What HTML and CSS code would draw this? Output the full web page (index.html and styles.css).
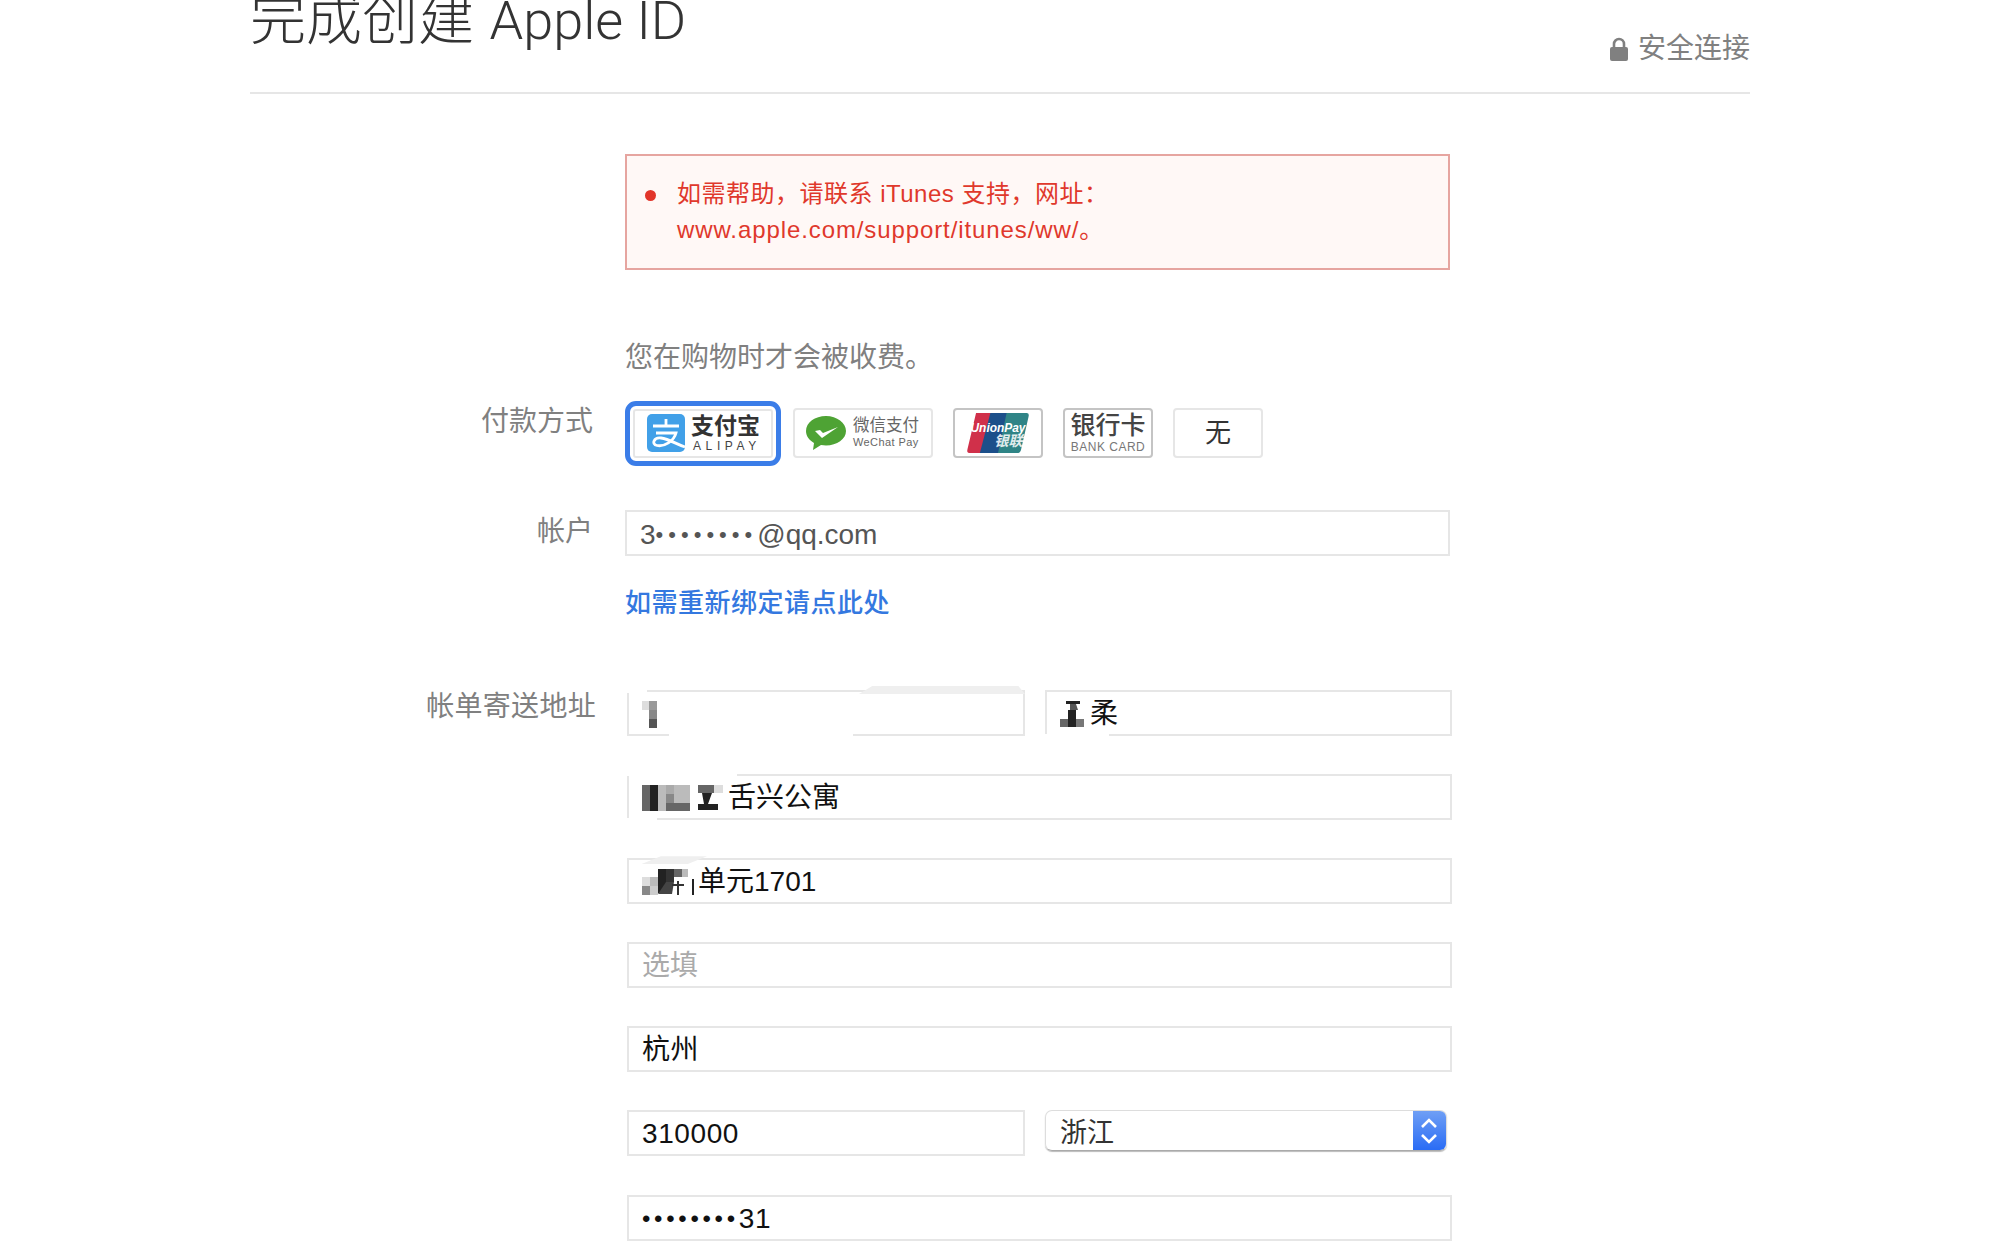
FILE: index.html
```html
<!DOCTYPE html>
<html lang="zh-CN">
<head>
<meta charset="utf-8">
<title>完成创建 Apple ID</title>
<link rel="stylesheet" href="styles.css">
</head>
<body>
<div class="page">
  <header class="head">
    <h1 class="title">完成创建 <span class="title-en">Apple ID</span></h1>
    <div class="secure">
      <svg class="lock" width="20" height="24" viewBox="0 0 20 24"><path d="M5 11V7a5 5 0 0 1 10 0v4" fill="none" stroke="#808080" stroke-width="2.6"/><rect x="1" y="10" width="18" height="14" rx="2" fill="#808080"/></svg>
      <span>安全连接</span>
    </div>
  </header>

  <main class="form">
    <div class="error">
      <span class="dot"></span>
      <p class="error-text">如需帮助，请联系 iTunes 支持，网址：<br><span class="error-url">www.apple.com/support/itunes/ww/。</span></p>
    </div>

    <p class="note">您在购物时才会被收费。</p>

    <div class="row pay-row">
      <label class="label pay-label">付款方式</label>
      <div class="pays">
        <div class="alipay-ring">
          <div class="alipay">
            <svg class="ali-icon" width="38" height="38" viewBox="0 0 38 38"><rect width="38" height="38" rx="5" fill="#41a0e8"/><path d="M6 12h26M19 5v7M9 19h20C27 27 17 33 10 31.500 4 30 7 23 14 24c8 1 15 6 24 9" fill="none" stroke="#fff" stroke-width="2.800"/></svg>
            <span class="ali-text"><b>支付宝</b><i>ALIPAY</i></span>
          </div>
        </div>
        <div class="pay pay-wechat">
          <svg width="42" height="36" viewBox="0 0 42 36"><path d="M21 1C10 1 1 7.500 1 16c0 5 3 9 8 12l-1 7 8-5c1.700.300 3.300.500 5 .500 11 0 20-6.500 20-14.500S32 1 21 1z" fill="#4ea334"/><path d="M10 16l7 7 16-11-15 6-3-3z" fill="#fff"/></svg>
          <span class="we-text"><b>微信支付</b><i>WeChat Pay</i></span>
        </div>
        <div class="pay pay-union">
          <svg width="64" height="42" viewBox="0 0 66 44">
            <path d="M10 1h22l-9 42H3q-3 0-2-4z" fill="#d0304a"/>
            <path d="M25 1h22l-9 42H14z" fill="#1c4f8a"/>
            <path d="M42 1h21q3 0 2 4l-8 35q-1 3-4 3H33z" fill="#2f8486"/>
            <text class="up-en" x="33" y="21" text-anchor="middle">UnionPay</text>
            <text class="up-cn" x="44" y="36" text-anchor="middle">银联</text>
          </svg>
        </div>
        <div class="pay pay-bank"><b>银行卡</b><i>BANK CARD</i></div>
        <div class="pay pay-none">无</div>
      </div>
    </div>

    <div class="row account-row">
      <label class="label account-label">帐户</label>
      <div class="field account">3<span class="dots-grey">••••••••</span>@qq.com</div>
    </div>

    <a class="rebind" href="#">如需重新绑定请点此处</a>

    <div class="row address-row">
      <label class="label addr-label">帐单寄送地址</label>
      <div class="fields">
        <div class="pair">
          <div class="field dark">
            <span class="smudge s1"></span><span class="smudge s2"></span><span class="smudge s3"></span>
            <svg class="mosaic" width="24" height="30" viewBox="0 0 24 30"><rect x="0" y="2" width="7" height="9" fill="#ddd"/><rect x="7" y="2" width="8" height="9" fill="#999"/><rect x="7" y="11" width="8" height="9" fill="#888"/><rect x="7" y="20" width="8" height="9" fill="#555"/></svg>
          </div>
          <div class="field dark">
            <span class="smudge s4"></span>
            <svg class="mosaic" width="30" height="30" viewBox="0 0 30 30"><rect x="6" y="2" width="14" height="3" fill="#222"/><path d="M10 5h6l2 6H10z" fill="#555"/><rect x="0" y="20" width="8" height="8" fill="#666"/><rect x="8" y="11" width="8" height="17" fill="#222"/><rect x="16" y="20" width="8" height="8" fill="#777"/></svg><span class="tail">柔</span>
          </div>
        </div>
        <div class="field dark">
          <span class="smudge s5"></span><span class="smudge s6"></span>
          <svg class="mosaic" width="86" height="30" viewBox="0 0 86 30"><rect x="0" y="2" width="8" height="26" fill="#666"/><rect x="8" y="2" width="8" height="26" fill="#222"/><rect x="16" y="2" width="8" height="26" fill="#bbb"/><rect x="24" y="2" width="8" height="9" fill="#aaa"/><rect x="24" y="11" width="8" height="9" fill="#888"/><rect x="24" y="20" width="24" height="8" fill="#666"/><rect x="32" y="2" width="16" height="18" fill="#bbb"/><rect x="56" y="2" width="16" height="8" fill="#666"/><rect x="72" y="2" width="9" height="8" fill="#ddd"/><path d="M60 10h10l-4 11h10v6H56v-6h6z" fill="#222"/></svg><span class="tail">舌兴公寓</span>
        </div>
        <div class="field dark">
          <span class="smudge s7"></span>
          <svg class="mosaic" width="56" height="30" viewBox="0 0 56 30"><rect x="0" y="10" width="8" height="9" fill="#ddd"/><rect x="0" y="19" width="8" height="9" fill="#888"/><rect x="8" y="10" width="8" height="9" fill="#bbb"/><rect x="8" y="19" width="8" height="9" fill="#ccc"/><rect x="16" y="2" width="8" height="24" fill="#222"/><rect x="24" y="2" width="8" height="13" fill="#333"/><rect x="32" y="2" width="8" height="8" fill="#666"/><rect x="40" y="2" width="6" height="8" fill="#bbb"/><path d="M24 15h8l-2 12H16z" fill="#444"/><path d="M30 18h12M36 14v14" stroke="#333" stroke-width="2"/><rect x="50" y="12" width="2" height="16" fill="#222"/></svg><span class="tail">单元1701</span>
        </div>
        <div class="field placeholder">选填</div>
        <div class="field dark">杭州</div>
        <div class="pair">
          <div class="field dark">310000</div>
          <div class="select">
            <span class="select-value">浙江</span>
            <span class="select-arrows">
              <svg width="20" height="30" viewBox="0 0 20 30"><path d="M3 11l7-7 7 7M3 19l7 7 7-7" fill="none" stroke="#fff" stroke-width="2.600"/></svg>
            </span>
          </div>
        </div>
        <div class="field dark"><span class="dots-dark">••••••••</span>31</div>
      </div>
    </div>
  </main>
</div>
</body>
</html>
```
FILE: styles.css
```css
* { box-sizing: border-box; }
html, body { margin: 0; padding: 0; height: 100%; overflow: hidden; background: #fff; }
body {
  font-family: "Liberation Sans", "Noto Sans CJK SC", sans-serif;
  color: #333;
}
.page { width: 1500px; margin: -23px 0 0 250px; }

.head {
  display: flex;
  justify-content: space-between;
  align-items: flex-end;
  height: 117px;
  border-bottom: 2px solid #e6e6e6;
}
.title {
  margin: 0 0 39px;
  font-size: 56px;
  line-height: 64px;
  font-weight: 300;
  color: #333;
}
.title-en {
  font-family: Roboto, "Liberation Sans", sans-serif;
  font-weight: 300;
  font-size: 54px;
}
.secure {
  display: flex;
  align-items: center;
  gap: 9px;
  margin-bottom: 23px;
  font-size: 28px;
  line-height: 40px;
  color: #808080;
}
.lock { display: block; }

.form { display: flex; flex-direction: column; }

.error {
  display: flex;
  align-items: flex-start;
  margin: 60px 0 0 375px;
  width: 825px;
  height: 116px;
  padding: 20px 0 0 18px;
  border: 2px solid #e6a5a0;
  background: #fff8f6;
}
.dot {
  flex: none;
  width: 11px;
  height: 11px;
  margin-top: 14px;
  border-radius: 50%;
  background: #e2352a;
}
.error-text {
  margin: 0 0 0 21px;
  font-size: 24px;
  line-height: 36px;
  color: #e0382c;
  letter-spacing: .5px;
}
.error-url { letter-spacing: .9px; }

.note {
  margin: 69px 0 0 375px;
  font-size: 28px;
  line-height: 38px;
  color: #808080;
}

.row { display: flex; align-items: flex-start; }
.label {
  flex: none;
  width: 343px;
  font-size: 28px;
  line-height: 40px;
  color: #808080;
  text-align: right;
}

.pay-row { margin-top: 23.500px; }
.pay-label { padding-top: 1px; margin-right: 32px; }
.pays { display: flex; align-items: flex-start; gap: 20px; }
.alipay-ring {
  width: 156px;
  height: 65px;
  margin-right: -8px;
  border: 5px solid #3b7de8;
  border-radius: 11px;
  padding: 3px;
}
.alipay {
  display: flex;
  align-items: center;
  height: 100%;
  padding-left: 12px;
  gap: 6px;
  border: 2px solid #e6e6e6;
  border-radius: 3px;
}
.ali-icon { flex: none; display: block; }
.ali-text, .we-text { display: flex; flex-direction: column; }
.ali-text b { font-size: 23px; line-height: 25px; font-weight: 700; color: #333; }
.ali-text i { font-size: 12px; line-height: 14px; font-style: normal; letter-spacing: 4.600px; color: #444; padding-left: 2px; }

.pay {
  height: 50px;
  margin-top: 7px;
  border: 2px solid #e6e6e6;
  border-radius: 4px;
  background: #fff;
}
.pay-wechat {
  display: flex;
  align-items: center;
  gap: 6px;
  width: 140px;
  padding-left: 10px;
}
.we-text b { font-size: 16.500px; line-height: 20px; font-weight: 400; color: #666; }
.we-text i { font-size: 11px; line-height: 15px; font-style: normal; color: #666; letter-spacing: .4px; }
.pay-union {
  display: flex;
  align-items: center;
  justify-content: center;
  width: 90px;
  border-color: #c4c4c4;
}
.up-en { font-size: 12.500px; font-weight: 700; font-style: italic; fill: #fff; }
.up-cn { font-size: 15px; font-weight: 700; font-style: italic; fill: #fff; opacity: .85; }
.pay-bank {
  display: flex;
  flex-direction: column;
  align-items: center;
  padding-top: 1px;
  width: 90px;
  border-color: #c4c4c4;
}
.pay-bank b { font-size: 25px; line-height: 29px; font-weight: 500; color: #444; }
.pay-bank i { font-size: 12px; line-height: 14px; font-style: normal; letter-spacing: .5px; color: #777; }
.pay-none {
  width: 90px;
  text-align: center;
  font-size: 26px;
  line-height: 46px;
  color: #333;
}

.field {
  position: relative;
  display: flex;
  align-items: center;
  height: 46px;
  padding: 2px 13px 0;
  border: 2px solid #e6e6e6;
  font-size: 28px;
  line-height: 40px;
  background: #fff;
}
.account-row { margin-top: 44.500px; }
.account-label { margin-right: 32px; padding-top: 2px; }
.account { width: 825px; padding-top: 4px; color: #555; }
.dots-grey { font-size: 22px; letter-spacing: 5px; }
.dots-dark { font-size: 24px; letter-spacing: 3.700px; }
.rebind {
  margin: 28px 0 0 375px;
  font-size: 26px;
  line-height: 38px;
  font-weight: 500;
  color: #3478e0;
  text-decoration: none;
  letter-spacing: .5px;
}

.address-row { margin-top: 68px; }
.addr-label { width: 346px; margin-right: 31px; margin-top: -3px; letter-spacing: .3px; }
.fields { display: flex; flex-direction: column; gap: 38.100px; width: 824.500px; }
.pair { display: flex; gap: 20px; }
.pair > .field:first-child { width: 398px; flex: none; }
.pair > :last-child { flex: 1; }
.dark { color: #111; letter-spacing: .6px; }
.placeholder { color: #aaa; }
.mosaic { flex: none; display: block; }
.tail { flex: none; letter-spacing: 0; }

.smudge { position: absolute; display: block; }
.s1 { left: 40px; bottom: -2px; width: 184px; height: 2px; background: #fff; }
.s2 { left: 230px; top: -6px; width: 166px; height: 8px; background: #efefef; clip-path: polygon(8% 0, 96% 0, 100% 100%, 0 100%); }
.s3 { left: -2px; top: -2px; width: 20px; height: 3px; background: #fff; }
.s4 { left: -2px; bottom: -2px; width: 64px; height: 2px; background: #fff; }
.s5 { left: -2px; top: -2px; width: 110px; height: 2px; background: #fff; }
.s6 { left: -2px; bottom: -2px; width: 30px; height: 2px; background: #fff; }
.s7 { left: 12px; top: -4px; width: 66px; height: 8px; background: #efefef; clip-path: polygon(30% 0, 100% 0, 70% 100%, 0 100%); }

.select {
  position: relative;
  display: flex;
  align-items: center;
  justify-content: space-between;
  height: 41px;
  margin-right: 5px;
  padding-left: 14px;
  border: 1px solid #ddd;
  border-bottom-color: #aaa;
  border-radius: 7px;
  box-shadow: 0 1px 1px #bbb;
  font-size: 27px;
  color: #333;
  overflow: hidden;
}
.select-value { flex: none; }
.select-arrows {
  flex: none;
  display: flex;
  align-items: center;
  justify-content: center;
  width: 33px;
  height: 100%;
  background: linear-gradient(#6f9ff5, #2a6cf5);
}
```
